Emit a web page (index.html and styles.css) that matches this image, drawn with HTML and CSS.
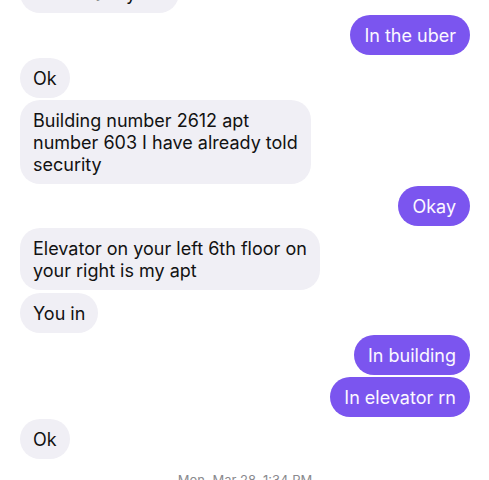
FILE: index.html
```html
<!DOCTYPE html>
<html>
<head>
<meta charset="utf-8">
<link rel="stylesheet" href="styles.css">
</head>
<body>
<div class="thread">
  <div class="msg in"><span class="bubble">Where are you?</span></div>
  <div class="msg out"><span class="bubble">In the uber</span></div>
  <div class="msg in"><span class="bubble">Ok</span></div>
  <div class="msg in"><span class="bubble">Building number 2612 apt<br>number 603 I have already told<br>security</span></div>
  <div class="msg out"><span class="bubble">Okay</span></div>
  <div class="msg in"><span class="bubble">Elevator on your left 6th floor on<br>your right is my apt</span></div>
  <div class="msg in"><span class="bubble">You in</span></div>
  <div class="msg out"><span class="bubble">In building</span></div>
  <div class="msg out"><span class="bubble">In elevator rn</span></div>
  <div class="msg in"><span class="bubble">Ok</span></div>
  <div class="stamp">Mon, Mar 28, 1:34 PM</div>
</div>
</body>
</html>
```
FILE: styles.css
```css
html, body {
  margin: 0;
  padding: 0;
  background: #ffffff;
  overflow: hidden;
}
body {
  width: 489px;
  height: 480px;
  font-family: Inter, "Noto Sans", sans-serif;
}
.thread {
  display: flex;
  flex-direction: column;
  gap: 2.25px;
  margin-top: -27px;
  padding: 0 19px 0 20px;
}
.msg {
  display: flex;
}
.msg.in { justify-content: flex-start; }
.msg.out { justify-content: flex-end; }
.bubble {
  display: block;
  font-size: 18px;
  line-height: 22px;
  padding: 10px 13px 8px;
  border-radius: 20px;
}
.in .bubble {
  background: #f0eff5;
  color: #121212;
}
.out .bubble {
  background: #7b55ef;
  color: #fbf8ff;
  padding: 10px 14px 8px;
}
.stamp {
  margin-top: 10px;
  text-align: center;
  font-size: 13px;
  line-height: 16px;
  color: #8a8a8e;
}
```
